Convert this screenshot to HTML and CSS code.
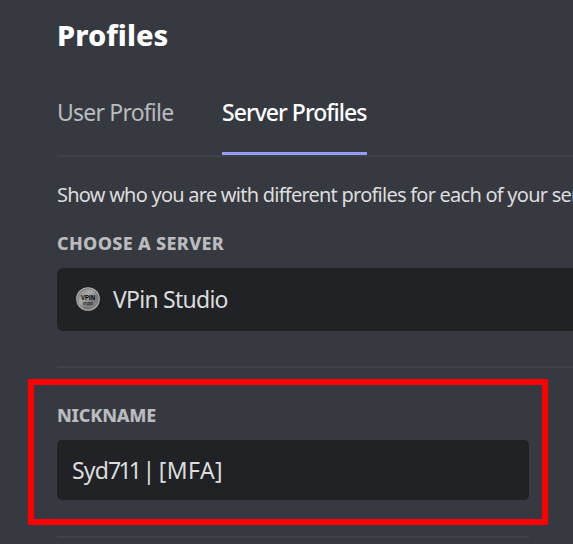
FILE: index.html
```
<!DOCTYPE html>
<html lang="en">
<head>
<meta charset="utf-8">
<title>Profiles</title>
<link rel="stylesheet" href="styles.css">
</head>
<body>
<main class="settings">
  <h1 class="title"><span>Profiles</span></h1>
  <nav class="tabs">
    <a class="tab"><span>User Profile</span></a>
    <a class="tab active"><span>Server Profiles</span></a>
  </nav>
  <p class="description"><span>Show who you are with different profiles for each of your servers.</span></p>
  <h2 class="label server-label"><span>CHOOSE A SERVER</span></h2>
  <div class="select">
    <svg class="server-icon" viewBox="0 0 24 24" aria-hidden="true">
      <defs><linearGradient id="metal" x1="0" y1="0" x2="1" y2="1"><stop offset="0" stop-color="#777"/><stop offset=".4" stop-color="#aaa"/><stop offset=".65" stop-color="#777"/><stop offset="1" stop-color="#999"/></linearGradient></defs>
      <circle cx="12" cy="12" r="11.2" fill="url(#metal)" stroke="#aaa" stroke-width="1.3"/>
      <circle cx="12" cy="12" r="10.2" fill="none" stroke="#666" stroke-width=".5"/>
      <text class="logo-main" x="12" y="13" text-anchor="middle" textLength="14" lengthAdjust="spacingAndGlyphs">VPIN</text>
      <text class="logo-sub" x="12" y="17.6" text-anchor="middle" textLength="10" lengthAdjust="spacingAndGlyphs">STUDIO</text>
    </svg>
    <span class="server-name">VPin Studio</span>
  </div>
  <hr class="divider">
  <section class="highlight">
    <h2 class="label nickname-label"><span>NICKNAME</span></h2>
    <div class="input"><span>Syd<span class="digits">711</span> | <span class="tag">[MFA]</span></span></div>
  </section>
  <hr class="divider short">
</main>
</body>
</html>
```
FILE: styles.css
```
* { box-sizing: border-box; }
html, body { margin: 0; height: 100%; overflow: hidden; }
body { background: #36393f; color: #dcddde; font-family: "Noto Sans", sans-serif; }
.settings { width: 573px; height: 544px; padding: 14px 0 0 57px; overflow: hidden; }
.title { margin: 0; height: 61px; font-size: 29px; line-height: 42px; font-weight: 800; letter-spacing: .05px; color: #fff; }
.tabs { display: flex; gap: 48px; height: 82px; border-bottom: 2px solid #3f4248; }
.tab { height: 80px; padding-top: 21px; font-size: 23px; line-height: 32px; letter-spacing: -.8px; color: #b9bbbe; white-space: nowrap; }
.tab:first-child { width: 117px; }
.tab.active { width: 145px; color: #fff; font-weight: 500; letter-spacing: -.97px; border-bottom: 3px solid #949cf7; }
.description { margin: 23px 0 0; height: 30px; font-size: 20px; line-height: 30px; letter-spacing: -.76px; white-space: nowrap; }
.label { margin: 0; font-size: 18px; line-height: 24px; font-weight: 800; color: #b9bbbe; white-space: nowrap; }
.server-label { margin-top: 21px; letter-spacing: .32px; }
.select { display: flex; align-items: center; gap: 13px; height: 63px; margin-top: 13px; padding-left: 19px; background: #202225; border-radius: 6px 0 0 6px; font-size: 23px; letter-spacing: -.75px; }
.server-icon { width: 24px; height: 24px; margin-top: -1px; }
.server-name { margin-top: -1px; }
.logo-main { font: 700 7.5px "Liberation Sans", sans-serif; letter-spacing: 0; fill: #000; }
.logo-sub { font: 700 3.5px "Liberation Sans", sans-serif; letter-spacing: 0; fill: #111; }
.divider { height: 2px; margin: 35px 0 0; border: 0; background: #3f4248; }
.highlight { width: 520px; height: 146px; margin: 11px 0 0 -29px; padding: 18px 13px 0 23px; border: 6px solid #f00; }
.nickname-label { letter-spacing: -.2px; }
.input { height: 60px; margin-top: 13px; padding-left: 15px; background: #202225; border-radius: 5px; font-size: 23px; line-height: 60px; letter-spacing: -.8px; word-spacing: -.8px; white-space: nowrap; }
.digits { letter-spacing: -2.8px; margin-right: -1px; }
.tag { letter-spacing: .4px; }
.short { width: 472px; margin-top: 11px; }
```
